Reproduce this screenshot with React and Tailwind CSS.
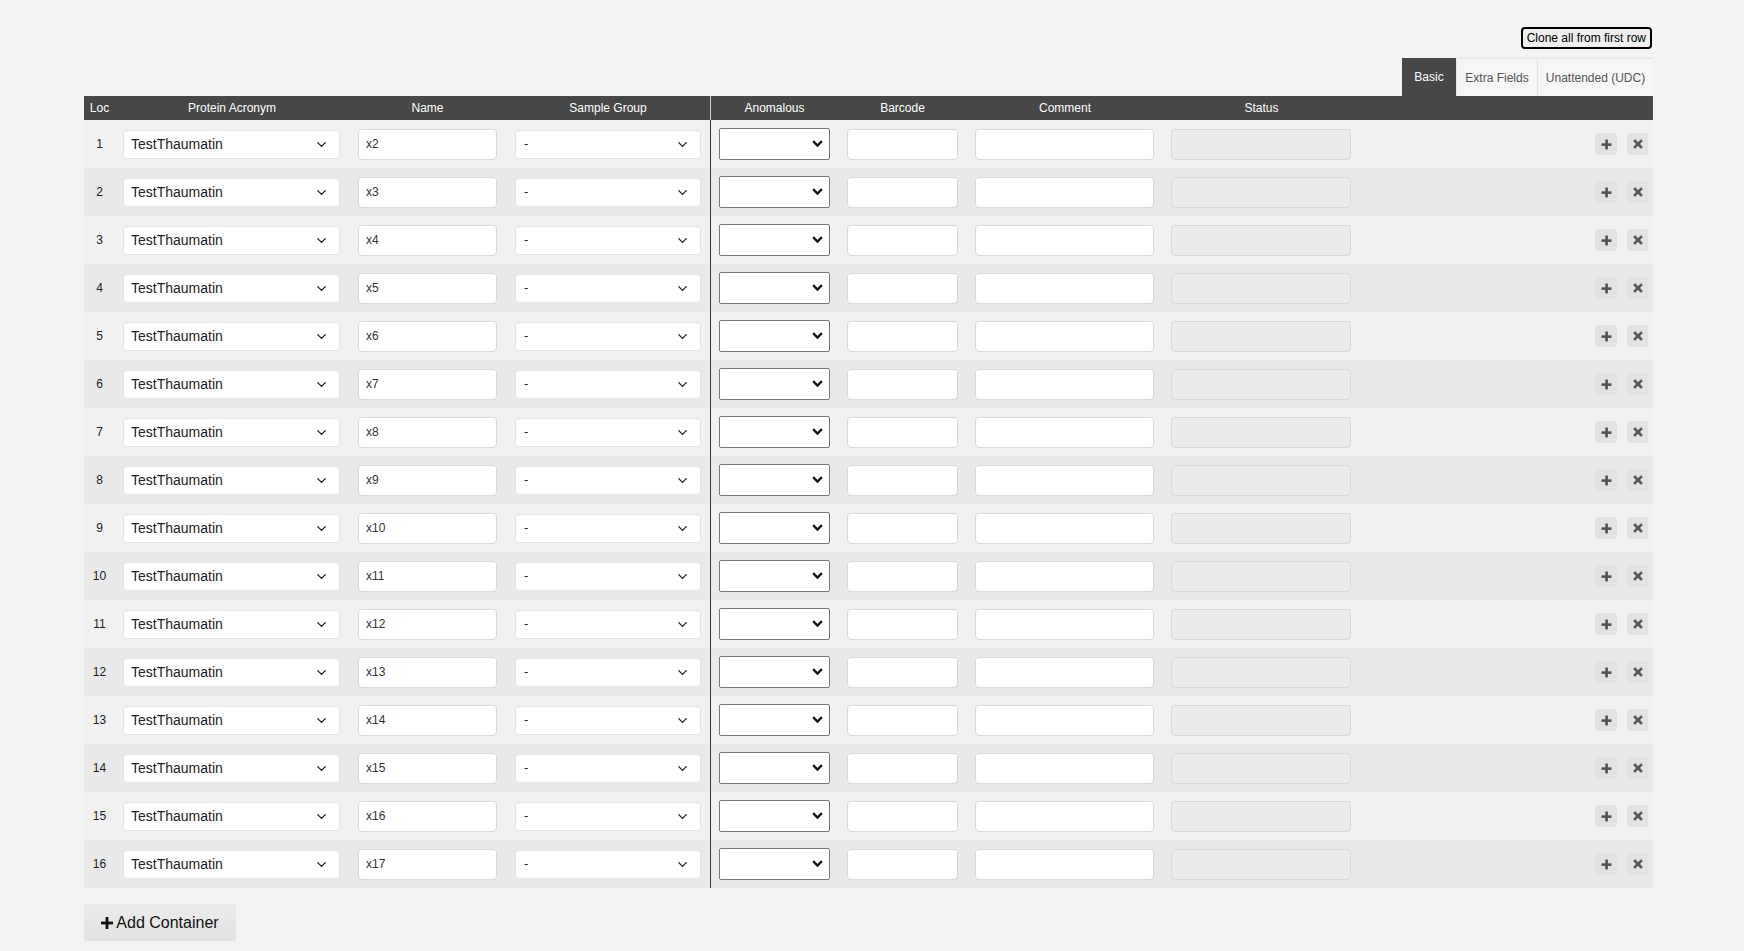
import React from 'react';

const rows = Array.from({ length: 16 }, (_, i) => ({ loc: i + 1, name: `x${i + 2}` }));

const Chevron = () => (
  <svg width="15" height="15" viewBox="0 0 24 24" fill="none" stroke="#222" strokeWidth="2.2" strokeLinecap="round" strokeLinejoin="round">
    <path d="M6 9l6 6 6-6" />
  </svg>
);

const NativeChevron = () => (
  <svg width="11" height="8" viewBox="0 0 11 8" fill="none" stroke="#111" strokeWidth="2.4" strokeLinecap="square">
    <path d="M2 2l3.5 3.5L9 2" />
  </svg>
);

const SmallPlus = () => (
  <svg width="11" height="11" viewBox="0 0 10 10" fill="#555">
    <rect x="3.9" y="0.5" width="2.4" height="9" />
    <rect x="0.5" y="3.9" width="9" height="2.4" />
  </svg>
);

const SmallX = () => (
  <svg width="10" height="10" viewBox="0 0 10 10" stroke="#555" strokeWidth="2.6" strokeLinecap="square">
    <path d="M2 2l6 6M8 2l-6 6" />
  </svg>
);

const Row = ({ row, even }) => (
  <div className={`flex h-[48px] items-center ${even ? 'bg-[#e9e9e9]' : 'bg-[#f1f1f1]'}`}>
    <div className="w-[31px] text-center text-[12px] text-[#222]">{row.loc}</div>
    <div className="w-[234px] pl-[8px]">
      <div className="flex h-[29px] w-[217px] items-center justify-between rounded-[4px] border border-[#e2e4e8] bg-white pl-[7px] pr-[10px] text-[14px] text-[#222]">
        <span>TestThaumatin</span>
        <Chevron />
      </div>
    </div>
    <div className="w-[157px] pl-[9px]">
      <div className="flex h-[31px] w-[139px] items-center rounded-[4px] border border-[#d6d9de] bg-white pl-[7px] text-[12px] text-[#333]">
        {row.name}
      </div>
    </div>
    <div className="w-[204px] pl-[9px]">
      <div className="flex h-[29px] w-[186px] items-center justify-between rounded-[4px] border border-[#e2e4e8] bg-white pl-[8px] pr-[10px] text-[13px] text-[#222]">
        <span>-</span>
        <Chevron />
      </div>
    </div>
    <div className="flex h-full w-[128px] items-center border-l border-[#333] pl-[8px]">
      <div className="flex h-[32px] w-[111px] items-center justify-end rounded-[2px] border border-[#767676] bg-white pr-[6px]">
        <NativeChevron />
      </div>
    </div>
    <div className="w-[129px] pl-[9px]">
      <div className="h-[31px] w-[111px] rounded-[4px] border border-[#d6d9de] bg-white" />
    </div>
    <div className="w-[196px] pl-[8px]">
      <div className="h-[31px] w-[179px] rounded-[4px] border border-[#d6d9de] bg-white" />
    </div>
    <div className="w-[197px] pl-[8px]">
      <div className="h-[31px] w-[180px] rounded-[4px] border border-[#d6d9de] bg-[#ebebeb]" />
    </div>
    <div className="flex flex-1 items-center justify-end gap-[10px] pr-[5px]">
      <button className="flex h-[22px] w-[22px] items-center justify-center rounded-[3px] bg-[#e2e2e2]">
        <SmallPlus />
      </button>
      <button className="flex h-[22px] w-[21px] items-center justify-center rounded-[3px] bg-[#e2e2e2]">
        <SmallX />
      </button>
    </div>
  </div>
);

export default function App() {
  return (
    <div className="min-h-[951px] bg-[#f3f3f3] pl-[84px] pt-[27px] font-['Liberation_Sans',Arial,sans-serif]">
      <div className="w-[1569px]">
        <div className="flex justify-end pr-[1px]">
          <button className="h-[22px] rounded-[4px] border-2 border-black bg-[#efefef] px-[4px] text-[12px] leading-none text-black">
            Clone all from first row
          </button>
        </div>

        <div className="mt-[9px] flex justify-end">
          <div className="flex h-[38px] text-[12px]">
            <div className="flex w-[54px] items-center justify-center bg-[#474747] text-white">Basic</div>
            <div className="flex w-[81px] items-center justify-center border-l border-t border-[#e1e4e8] bg-[#f6f6f6] text-[#555]">Extra Fields</div>
            <div className="flex w-[116px] items-center justify-center border-l border-t border-[#e1e4e8] bg-[#f6f6f6] text-[#555]">Unattended (UDC)</div>
          </div>
        </div>

        <div className="flex h-[24px] items-center bg-[#474747] text-[12px] text-white">
          <div className="w-[31px] text-center">Loc</div>
          <div className="w-[234px] text-center">Protein Acronym</div>
          <div className="w-[157px] text-center">Name</div>
          <div className="w-[204px] text-center">Sample Group</div>
          <div className="flex h-full w-[128px] items-center justify-center border-l border-[#cfcfcf]">Anomalous</div>
          <div className="w-[129px] text-center">Barcode</div>
          <div className="w-[196px] text-center">Comment</div>
          <div className="w-[197px] text-center">Status</div>
          <div className="flex-1" />
        </div>

        {rows.map((row, i) => (
          <Row key={row.loc} row={row} even={i % 2 === 1} />
        ))}

        <div className="pt-[16px]">
          <button className="flex h-[37px] w-[152px] items-center justify-center gap-[3px] rounded-[3px] bg-gradient-to-b from-[#ececec] to-[#e2e2e2] text-[16px] text-[#111]">
            <svg width="12" height="12" viewBox="0 0 12 12" fill="#111">
              <rect x="4.6" y="0" width="2.8" height="12" />
              <rect x="0" y="4.6" width="12" height="2.8" />
            </svg>
            <span>Add Container</span>
          </button>
        </div>
      </div>
    </div>
  );
}
